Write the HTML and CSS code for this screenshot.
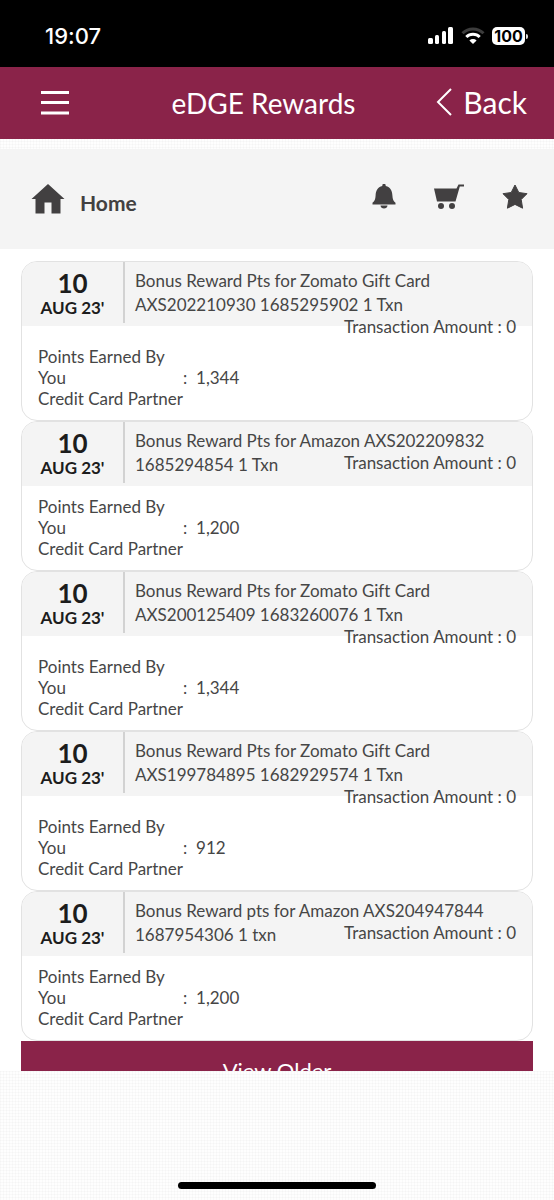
FILE: index.html
```html
<!DOCTYPE html>
<html lang="en">
<head>
    <meta charset="UTF-8">
    <meta name="viewport" content="width=device-width, initial-scale=1.0">
    <title>eDGE Rewards</title>
    <link rel="stylesheet" href="styles.css">
</head>
<body>
    <div class="status-bar">
        <span class="time">19:07</span>
        <div class="status-icons">
            <svg width="26" height="18" viewBox="0 0 26 18" fill="#fff">
                <rect x="0" y="11" width="5" height="6" rx="1.5"/>
                <rect x="7" y="8" width="4" height="9" rx="1.5"/>
                <rect x="14" y="4" width="4" height="13" rx="1.5"/>
                <rect x="20" y="0" width="5" height="17" rx="1.5"/>
            </svg>
            <svg width="24" height="18" viewBox="0 0 24 18" fill="none" stroke-width="3">
                <path d="M1.500 6.200a15 15 0 0 1 21 0" stroke="#3c3c3c"/>
                <path d="M5.300 10a9.600 9.600 0 0 1 13.400 0" stroke="#fff"/>
                <path d="M12 17l-3.600-3.600a5.200 5.200 0 0 1 7.200 0z" fill="#fff"/>
            </svg>
            <span class="battery">100</span>
        </div>
    </div>

    <header class="header">
        <button class="menu-btn" aria-label="Menu">
            <svg width="28" height="26" viewBox="0 0 28 26" stroke="#fff" stroke-width="3">
                <path d="M0 2.500h28M0 12.500h28M0 23h28"/>
            </svg>
        </button>
        <h1>eDGE Rewards</h1>
        <a class="back" href="#">
            <svg width="16" height="28" viewBox="0 0 16 28" fill="none" stroke="#fff" stroke-width="2">
                <path d="M15 1L2 14l13 13"/>
            </svg>
            Back
        </a>
    </header>

    <main>
        <nav class="nav">
            <a class="home" href="#">
                <svg width="34" height="30" viewBox="0 0 34 30" fill="#424041">
                    <path d="M17 0L33.500 15H29.500v14.500h-9V18.500h-7v11h-9V15H.5z"/>
                </svg>
                <span>Home</span>
            </a>
            <div class="nav-icons">
                <a href="#" aria-label="Notifications">
                    <svg width="24" height="26" viewBox="0 0 24 26" fill="#424041">
                        <path d="M10.300 2V1.500a1.700 1.700 0 0 1 3.400 0V2c4.800 1.100 6.500 5 6.700 9.500.2 4 1 5.600 3.100 7.200V20.500H.5v-1.800c2.100-1.600 2.900-3.200 3.100-7.200.2-4.500 1.900-8.400 6.700-9.500z"/>
                        <path d="M8.500 21.500h7c0 4-7 4-7 0z"/>
                    </svg>
                </a>
                <a href="#" aria-label="Cart">
                    <svg width="30" height="26" viewBox="0 0 30 26" fill="#424041">
                        <path d="M0 4.500h22.500L24.500.5H30v2h-4.200L21.500 17.500H3z"/>
                        <circle cx="7" cy="22" r="3"/>
                        <circle cx="18" cy="22" r="3"/>
                    </svg>
                </a>
                <a href="#" aria-label="Favourites">
                    <svg width="26" height="26" viewBox="0 0 26 26" fill="#424041" stroke="#424041" stroke-width="1" stroke-linejoin="round">
                        <path d="M13 1l3.800 7.500 8.200 1.200-5.800 5.800 1.400 8.700-7.600-3.800-7.600 3.800 1.400-8.700L1 9.700l8.200-1.200z"/>
                    </svg>
                </a>
            </div>
        </nav>

        <section class="list">
            <article class="card">
                <div class="card-head">
                    <div class="date"><b>10</b><span>AUG 23'</span></div>
                    <div class="details">
                        Bonus Reward Pts for Zomato Gift Card AXS202210930 1685295902 1 Txn
                        <span class="amount">Transaction Amount : 0</span>
                    </div>
                </div>
                <div class="card-body">
                    <table>
                        <tr><th colspan="3">Points Earned By</th></tr>
                        <tr><th>You</th><td class="colon">:</td><td>1,344</td></tr>
                        <tr><th>Credit Card Partner</th></tr>
                    </table>
                </div>
            </article>

            <article class="card">
                <div class="card-head">
                    <div class="date"><b>10</b><span>AUG 23'</span></div>
                    <div class="details">
                        Bonus Reward Pts for Amazon AXS202209832 1685294854 1 Txn
                        <span class="amount">Transaction Amount : 0</span>
                    </div>
                </div>
                <div class="card-body">
                    <table>
                        <tr><th colspan="3">Points Earned By</th></tr>
                        <tr><th>You</th><td class="colon">:</td><td>1,200</td></tr>
                        <tr><th>Credit Card Partner</th></tr>
                    </table>
                </div>
            </article>

            <article class="card">
                <div class="card-head">
                    <div class="date"><b>10</b><span>AUG 23'</span></div>
                    <div class="details">
                        Bonus Reward Pts for Zomato Gift Card AXS200125409 1683260076 1 Txn
                        <span class="amount">Transaction Amount : 0</span>
                    </div>
                </div>
                <div class="card-body">
                    <table>
                        <tr><th colspan="3">Points Earned By</th></tr>
                        <tr><th>You</th><td class="colon">:</td><td>1,344</td></tr>
                        <tr><th>Credit Card Partner</th></tr>
                    </table>
                </div>
            </article>

            <article class="card">
                <div class="card-head">
                    <div class="date"><b>10</b><span>AUG 23'</span></div>
                    <div class="details">
                        Bonus Reward Pts for Zomato Gift Card AXS199784895 1682929574 1 Txn
                        <span class="amount">Transaction Amount : 0</span>
                    </div>
                </div>
                <div class="card-body">
                    <table>
                        <tr><th colspan="3">Points Earned By</th></tr>
                        <tr><th>You</th><td class="colon">:</td><td>912</td></tr>
                        <tr><th>Credit Card Partner</th></tr>
                    </table>
                </div>
            </article>

            <article class="card">
                <div class="card-head">
                    <div class="date"><b>10</b><span>AUG 23'</span></div>
                    <div class="details">
                        Bonus Reward pts for Amazon AXS204947844 1687954306 1 txn
                        <span class="amount">Transaction Amount : 0</span>
                    </div>
                </div>
                <div class="card-body">
                    <table>
                        <tr><th colspan="3">Points Earned By</th></tr>
                        <tr><th>You</th><td class="colon">:</td><td>1,200</td></tr>
                        <tr><th>Credit Card Partner</th></tr>
                    </table>
                </div>
            </article>

            <button class="view-older">View Older</button>
        </section>
    </main>

    <footer class="bottom-area">
        <div class="home-indicator"></div>
    </footer>
</body>
</html>
```

FILE: styles.css
```css
* {
    box-sizing: border-box;
}

body {
    margin: 0;
    height: 100vh;
    display: flex;
    flex-direction: column;
    font-family: Lato, sans-serif;
    font-size: 17px;
    font-variant-ligatures: none;
    color: #464646;
    background-color: #fefefe;
    background-image:
        repeating-linear-gradient(to right, rgba(0, 0, 0, 0.02) 0 1px, transparent 1px 3px),
        repeating-linear-gradient(to bottom, rgba(0, 0, 0, 0.02) 0 1px, transparent 1px 3px);
}

a {
    color: inherit;
    text-decoration: none;
}

svg {
    display: block;
}

.status-bar {
    flex: none;
    display: flex;
    justify-content: space-between;
    align-items: center;
    height: 67px;
    padding: 4px 26px 0 45px;
    background: #000;
    color: #fff;
    font-family: Inter, sans-serif;
}

.time {
    font-size: 22px;
    font-weight: 500;
}

.status-icons {
    display: flex;
    align-items: center;
    gap: 7px;
}

.battery {
    position: relative;
    width: 33px;
    margin-right: 3px;
    border-radius: 5px;
    background: #fff;
    color: #000;
    font-size: 16px;
    font-weight: 700;
    line-height: 18px;
    text-align: center;
}

.battery::after {
    content: "";
    position: absolute;
    right: -3px;
    top: 7px;
    width: 2px;
    height: 5px;
    border-radius: 0 2px 2px 0;
    background: #ddd;
}

.header {
    flex: none;
    display: grid;
    grid-template-columns: 1fr auto 1fr;
    align-items: center;
    height: 72px;
    padding-right: 27px;
    background: #8a2349;
    color: #fff;
}

.menu-btn {
    justify-self: start;
    padding: 0 0 0 41px;
    border: 0;
    background: none;
}

.header h1 {
    margin: 0;
    font-size: 28px;
    font-weight: 400;
}

.back {
    justify-self: end;
    display: flex;
    align-items: center;
    gap: 11px;
    font-size: 30px;
    line-height: 34px;
    padding-bottom: 2px;
}

main {
    flex: 1;
    min-height: 0;
    overflow: hidden;
    padding-top: 10px;
}

.nav {
    display: flex;
    justify-content: space-between;
    height: 100px;
    padding: 35px 26px 0 31px;
    background: #f4f4f4;
}

.home {
    display: flex;
    gap: 15px;
    color: #424041;
    font-size: 21px;
    font-weight: 700;
    line-height: 38px;
}

.nav-icons {
    display: flex;
    gap: 38px;
}

.list {
    padding: 12px 21px 0;
    background: #fff;
}

.card {
    border: 1px solid #e2e2e2;
    border-radius: 16px;
    background: #fff;
    overflow: hidden;
}

.card-head {
    height: 64px;
    background: #f4f4f4;
}

.date {
    float: left;
    width: 103px;
    height: 61px;
    padding-top: 7px;
    border-right: 2px solid #d2d2d2;
    color: #1c1c1c;
    text-align: center;
}

.date b,
.date span {
    display: block;
    font-weight: 700;
}

.date b {
    font-size: 26px;
    line-height: 28px;
}

.date span {
    font-size: 17px;
    line-height: 22px;
}

.details {
    padding: 7px 16px 0 113px;
    line-height: 24px;
}

.amount {
    float: right;
    line-height: 19px;
}

.card-body {
    clear: both;
    padding: 10px 16px 11px;
}

table {
    border-collapse: collapse;
}

th,
td {
    padding: 0;
    font-weight: 400;
    line-height: 21px;
    text-align: left;
}

.colon {
    width: 13px;
}

.view-older {
    display: block;
    width: 100%;
    height: 58px;
    border: 0;
    background: #8a2349;
    color: #fff;
    font-family: Lato, sans-serif;
    font-size: 22px;
}

.bottom-area {
    flex: none;
    display: flex;
    justify-content: center;
    align-items: flex-end;
    height: 129px;
    padding-bottom: 11px;
}

.home-indicator {
    width: 198px;
    height: 7px;
    border-radius: 4px;
    background: #000;
}
```
